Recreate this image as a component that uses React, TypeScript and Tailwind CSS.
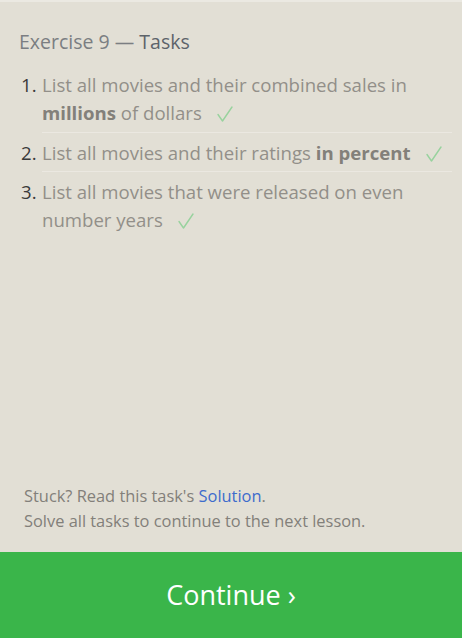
import React from "react";

const items: { content: React.ReactNode }[] = [
  {
    content: (
      <>
        List all movies and their combined sales in <b className="font-bold text-[#83807a]">millions</b> of dollars
      </>
    ),
  },
  {
    content: (
      <>
        List all movies and their ratings <b className="font-bold text-[#83807a]">in percent</b>
      </>
    ),
  },
  {
    content: <>List all movies that were released on even number years</>,
  },
];

function Check() {
  return (
    <svg
      width="16"
      height="16"
      viewBox="0 0 16 16"
      className="inline-block ml-[15px] align-[-2px]"
      fill="none"
      stroke="#98d29e"
      strokeWidth="1.4"
      strokeLinecap="round"
      strokeLinejoin="round"
    >
      <path d="M1 8.5 L5.5 15 L15 1" />
    </svg>
  );
}

export default function App() {
  return (
    <div
      className="w-[462px] h-[638px] flex flex-col bg-[#e2dfd5] border-t-2 border-[#ebe9e2] overflow-hidden"
      style={{ fontFamily: '"Open Sans", "Noto Sans", sans-serif' }}
    >
      <div className="flex-1 flex flex-col">
        <h1 className="pl-[19px] pt-[26px] text-[19.5px] leading-[28px] text-[#7b7e82]">
          Exercise 9 — <span className="text-[#5d636a]">Tasks</span>
        </h1>
        <ol className="mt-[10px] pl-[21px] pr-[10px] flex flex-col">
          {items.map((it, i) => (
            <li key={i} className="flex">
              <span
                className={
                  "w-[21px] shrink-0 text-[18.6px] leading-[28px] text-[#3a3a3a] " +
                  (i > 0 ? "pt-[7px]" : "pt-[5px]")
                }
              >
                {i + 1}.
              </span>
              <div
                className={
                  "flex-1 text-[18.6px] leading-[28px] text-[#928f89] " +
                  (i > 0 ? "border-t border-[#ebe8e1] pt-[6px] pb-[4px]" : "pt-[5px] pb-[5px]")
                }
              >
                {it.content}
                <Check />
              </div>
            </li>
          ))}
        </ol>
        <div className="mt-auto pl-[24px] pb-[19px] text-[16.4px] leading-[25px] text-[#82807a]">
          <div>
            Stuck? Read this task's <span className="text-[#3d6bcc]">Solution</span>.
          </div>
          <div>Solve all tasks to continue to the next lesson.</div>
        </div>
      </div>
      <div className="h-[86px] bg-[#3ab54a] flex items-center justify-center text-white text-[27px] pt-[1px]">
        Continue ›
      </div>
    </div>
  );
}
